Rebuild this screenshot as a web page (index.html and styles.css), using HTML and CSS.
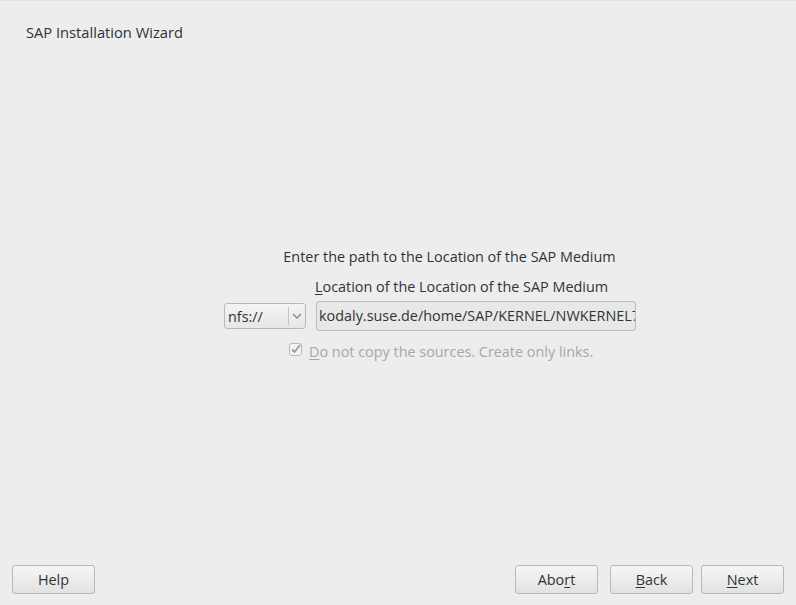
FILE: index.html
```html
<!DOCTYPE html>
<html>
<head>
<meta charset="utf-8">
<link rel="stylesheet" href="styles.css">
</head>
<body>
<div class="window">
  <header class="title">SAP Installation Wizard</header>
  <main class="content">
    <div class="form">
      <div class="heading">Enter the path to the Location of the SAP Medium</div>
      <div class="row">
        <div class="spacer"></div>
        <label class="label"><u>L</u>ocation of the Location of the SAP Medium</label>
      </div>
      <div class="row fields">
        <div class="combo">
          <span class="combo-text">nfs://</span>
          <span class="combo-arrow">
            <svg width="10" height="6" viewBox="0 0 10 6"><path d="M1 1 L5 5 L9 1" fill="none" stroke="#8a8a8a" stroke-width="1.3"/></svg>
          </span>
        </div>
        <div class="input">kodaly.suse.de/home/SAP/KERNEL/NWKERNEL7</div>
      </div>
      <div class="check-row">
        <span class="checkbox">
          <svg width="13" height="13" viewBox="0 0 13 13"><rect x="0.5" y="0.5" width="12" height="12" rx="2" fill="#f2f2f2" stroke="#b8b8b8"/><path d="M3 6.5 L5.5 9 L11 2" fill="none" stroke="#9a9a9a" stroke-width="1.8"/></svg>
        </span>
        <span class="check-label"><u>D</u>o not copy the sources. Create only links.</span>
      </div>
    </div>
  </main>
  <footer class="buttons">
    <button class="btn">Help</button>
    <div class="grow"></div>
    <button class="btn">Abo<u>r</u>t</button>
    <button class="btn"><u>B</u>ack</button>
    <button class="btn"><u>N</u>ext</button>
  </footer>
</div>
</body>
</html>
```
FILE: styles.css
```css
* { box-sizing: border-box; }
html, body {
  margin: 0;
  padding: 0;
  background: #ededed;
}
body {
  font-family: "Open Sans", "DejaVu Sans", sans-serif;
  font-size: 14.4px;
  color: #2e3436;
}
.window {
  width: 796px;
  height: 605px;
  display: flex;
  flex-direction: column;
  border-top: 1px solid #e3e3e3;
}
.title {
  padding: 22px 0 0 26px;
  height: 60px;
  line-height: 18px;
  font-size: 14.7px;
}
.content {
  flex: 1;
  display: flex;
  flex-direction: column;
  padding-top: 187px;
}
.form {
  margin-left: 224px;
  width: 412px;
  display: flex;
  flex-direction: column;
}
.heading {
  text-align: center;
  padding-left: 39px;
  line-height: 18px;
}
.row {
  display: flex;
}
.spacer {
  width: 91px;
}
.label {
  margin-top: 12px;
  line-height: 18px;
}
.label u, .check-label u, .btn u {
  text-decoration: underline;
  text-underline-offset: 2px;
}
.fields {
  margin-top: 5px;
  align-items: center;
  gap: 10px;
}
.combo {
  width: 82px;
  height: 26px;
  border: 1px solid #b9b9b9;
  border-radius: 3px;
  background: linear-gradient(#f4f4f4, #e6e6e6);
  display: flex;
  align-items: center;
}
.combo-text {
  flex: 1;
  padding-left: 3px;
}
.combo-arrow {
  width: 17px;
  height: 18px;
  border-left: 1px solid #c4c4c4;
  display: flex;
  align-items: center;
  justify-content: center;
}
.input {
  width: 320px;
  height: 30px;
  border: 1px solid #bcbcbc;
  border-radius: 3px;
  background: #e8e8e8;
  padding: 0 0 0 2px;
  line-height: 28px;
  white-space: nowrap;
  overflow: hidden;
}
.check-row {
  margin-top: 12px;
  margin-left: 65px;
  display: flex;
  align-items: center;
  gap: 7px;
  color: #a5a7a8;
}
.checkbox {
  display: flex;
  height: 13px;
  margin-top: -6px;
}
.check-label {
  line-height: 18px;
}
.buttons {
  display: flex;
  padding: 0 12px 11px 12px;
  gap: 12px;
}
.grow { flex: 1; }
.btn {
  font: inherit;
  color: #2e3436;
  width: 83px;
  height: 29px;
  border: 1px solid #b8b8b8;
  border-radius: 3px;
  background: linear-gradient(#f6f6f6, #e2e2e2);
  padding: 0;
}
.buttons .btn:nth-child(3) { margin-left: -1px; }
.buttons .btn:nth-child(5) { margin-left: -4px; }
```
